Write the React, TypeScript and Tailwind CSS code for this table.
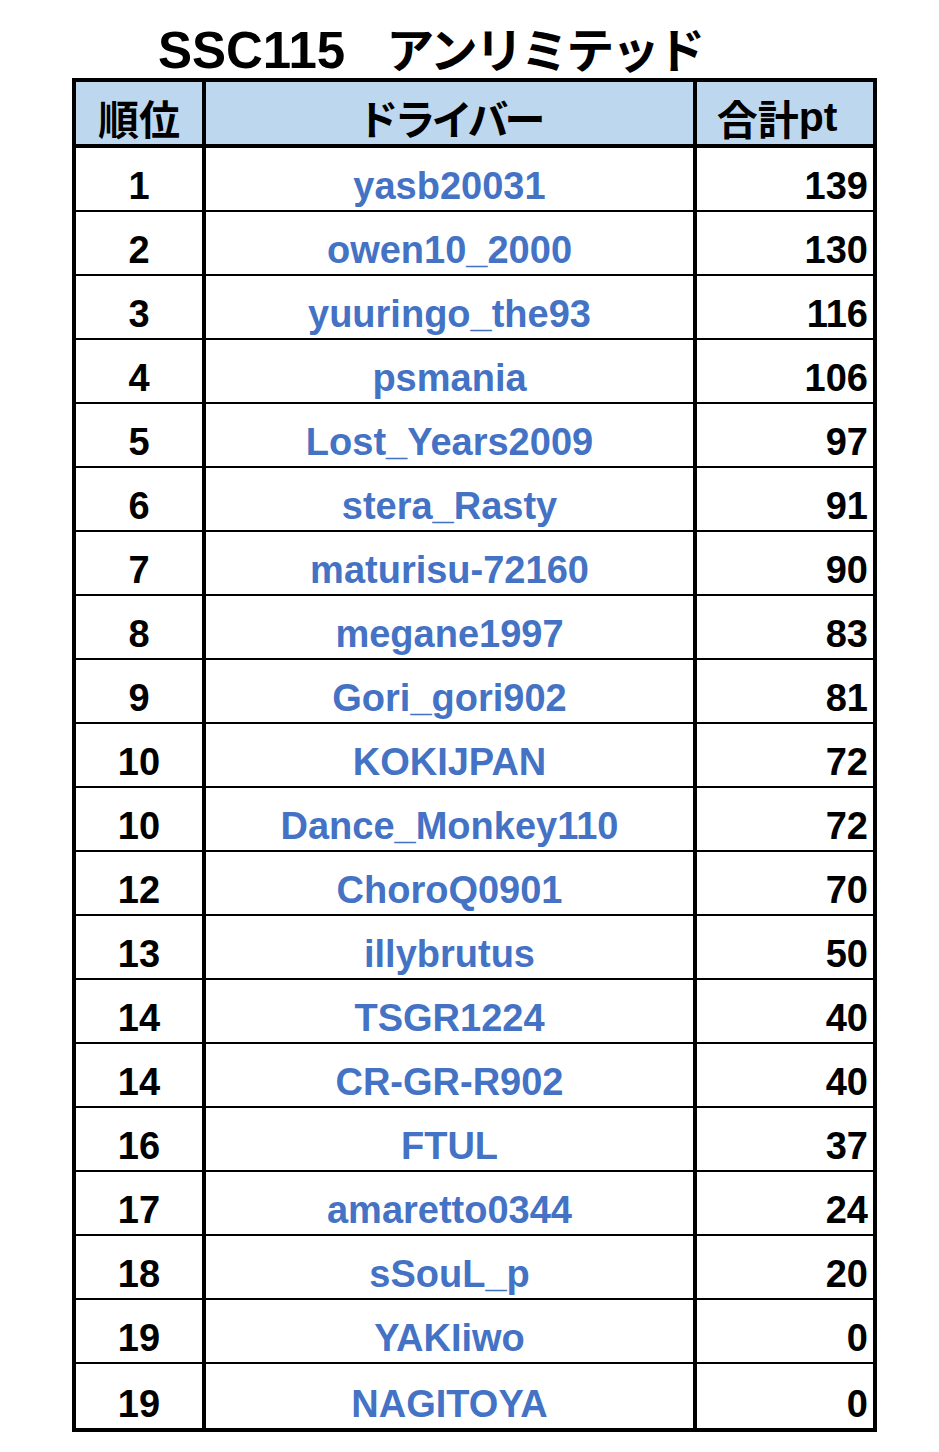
import React from "react";

const rows: [string, string, string][] = [
  ["1", "yasb20031", "139"],
  ["2", "owen10_2000", "130"],
  ["3", "yuuringo_the93", "116"],
  ["4", "psmania", "106"],
  ["5", "Lost_Years2009", "97"],
  ["6", "stera_Rasty", "91"],
  ["7", "maturisu-72160", "90"],
  ["8", "megane1997", "83"],
  ["9", "Gori_gori902", "81"],
  ["10", "KOKIJPAN", "72"],
  ["10", "Dance_Monkey110", "72"],
  ["12", "ChoroQ0901", "70"],
  ["13", "illybrutus", "50"],
  ["14", "TSGR1224", "40"],
  ["14", "CR-GR-R902", "40"],
  ["16", "FTUL", "37"],
  ["17", "amaretto0344", "24"],
  ["18", "sSouL_p", "20"],
  ["19", "YAKIiwo", "0"],
  ["19", "NAGITOYA", "0"],
];

const font = { fontFamily: '"Liberation Sans", "Noto Sans CJK JP", sans-serif' };

export default function App() {
  return (
    <div className="w-[939px] h-[1452px] bg-white" style={font}>
      <div className="h-[78px] pl-[158px] flex items-baseline pt-[23px] font-bold text-black whitespace-nowrap">
        <span className="text-[51px] leading-none">SSC115</span>
        <span className="text-[48px] leading-none ml-[41px] tracking-[-2.5px]" style={{ fontFamily: '"Noto Sans CJK JP", sans-serif' }}>
          アンリミテッド
        </span>
      </div>
      <div className="ml-[72px] w-[805px] border-4 border-black">
        <div className="flex h-[66px] bg-[#bdd7ee] border-b-4 border-black font-bold text-black text-[41px] leading-none" style={{ fontFamily: '"Noto Sans CJK JP", sans-serif' }}>
          <div className="w-[130px] border-r-4 border-black flex items-end justify-center pb-[6px]">順位</div>
          <div className="w-[491px] border-r-4 border-black flex items-end justify-center pb-[6px] tracking-[-4px]">ドライバー</div>
          <div className="flex-1 flex items-end justify-center pb-[6px] pr-[16px]">
            合計<span style={font}>pt</span>
          </div>
        </div>
        {rows.map(([rank, name, pt], i) => (
          <div
            key={i}
            className={`flex h-[64px] font-bold text-[38px] leading-none ${i < rows.length - 1 ? "border-b-2 border-black" : ""}`}
          >
            <div className="w-[130px] border-r-4 border-black flex items-end justify-center pb-[5px] text-black">{rank}</div>
            <div className="w-[491px] border-r-4 border-black flex items-end justify-center pb-[5px] text-[#4472c4]">{name}</div>
            <div className="flex-1 flex items-end justify-end pr-[5px] pb-[5px] text-black">{pt}</div>
          </div>
        ))}
      </div>
    </div>
  );
}
